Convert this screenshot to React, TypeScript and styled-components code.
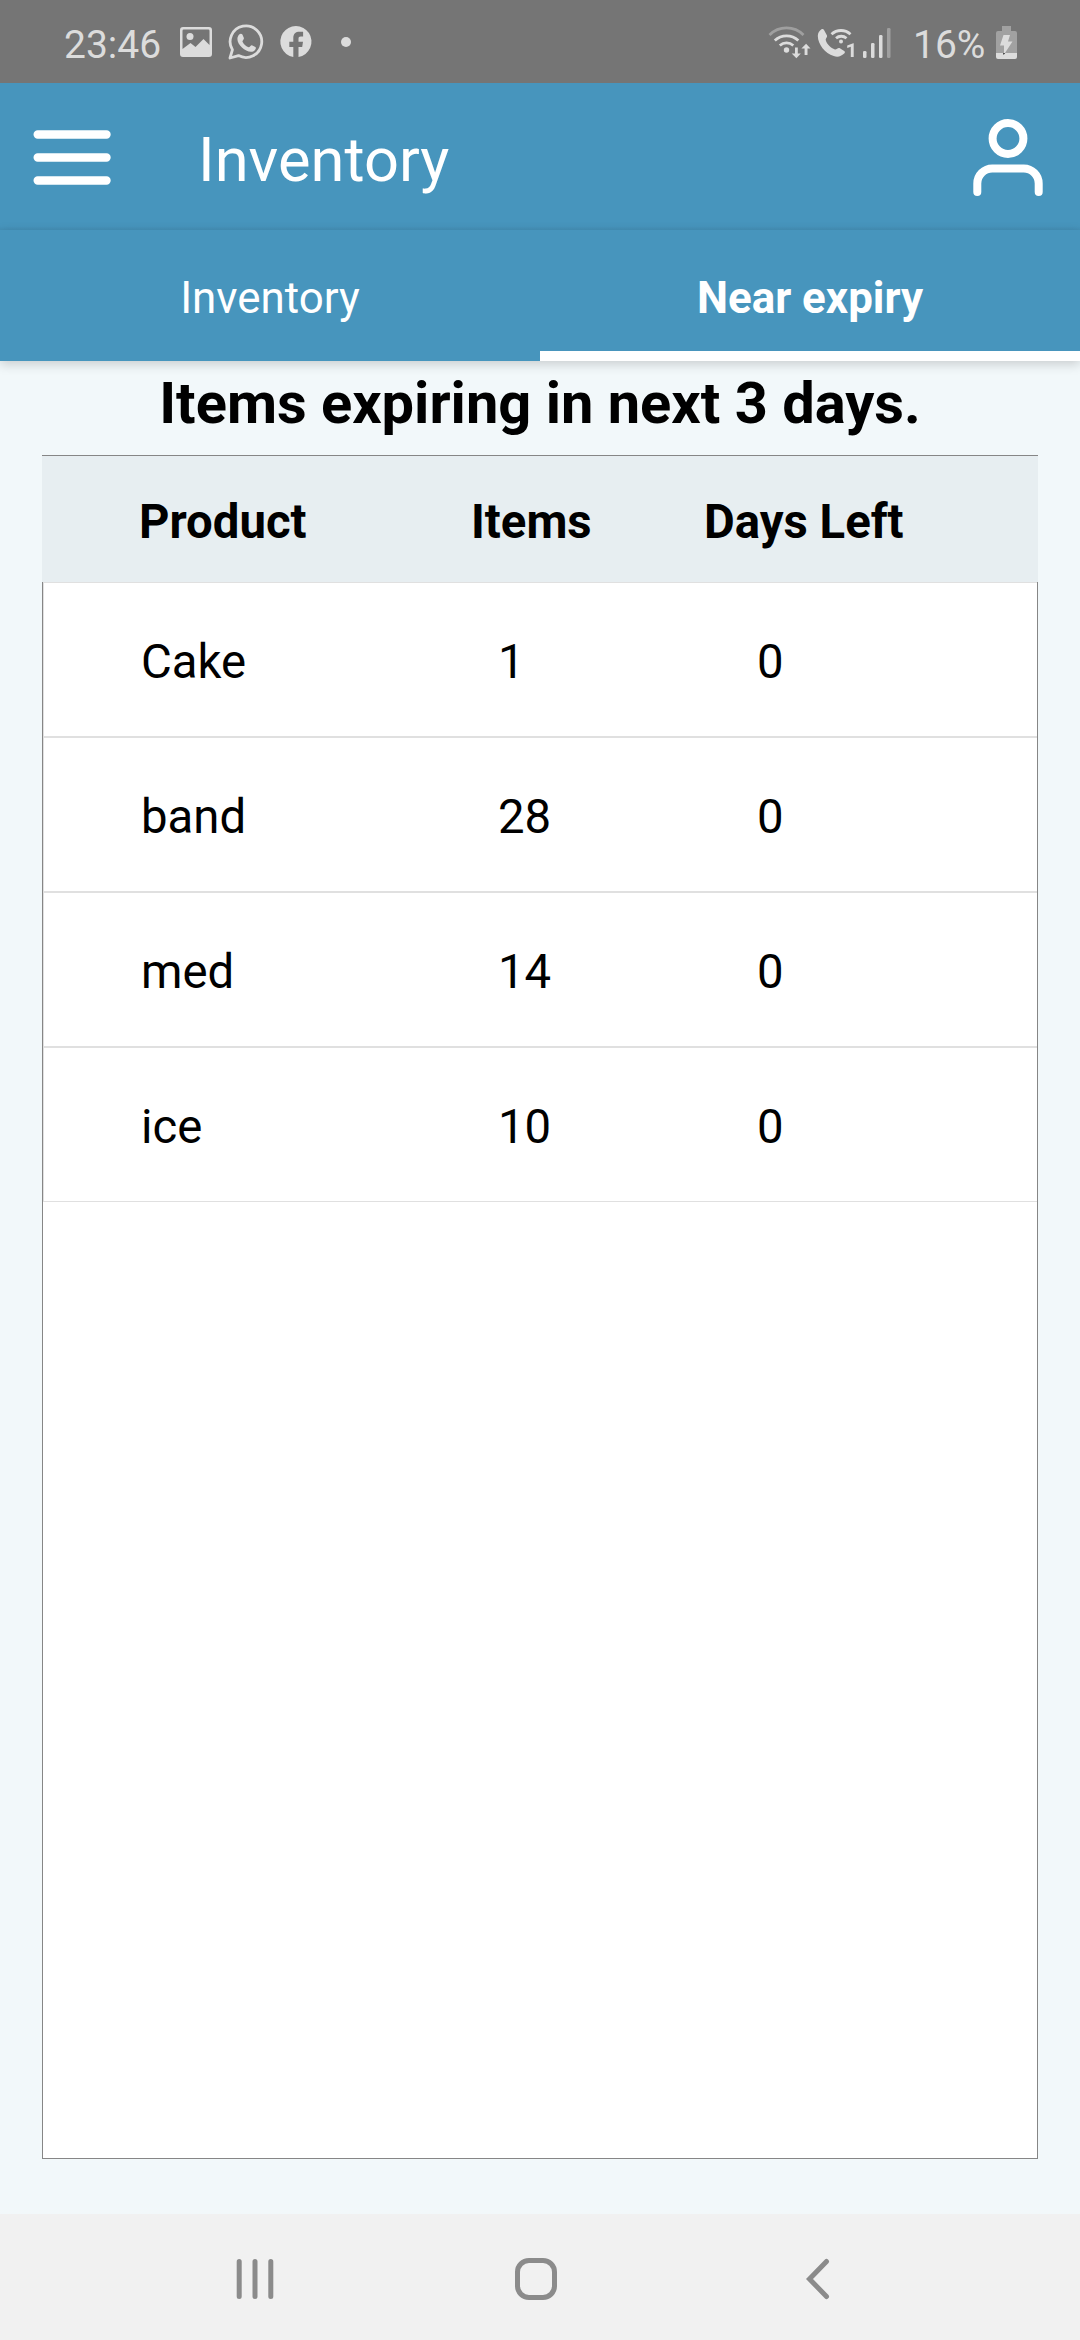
import React from "react";
import styled, { createGlobalStyle } from "styled-components";

const GlobalStyle = createGlobalStyle`
  * { box-sizing: border-box; }
  body { margin: 0; background: #f2f8fa; font-family: Roboto, "Liberation Sans", sans-serif; }
`;

const Screen = styled.div`
  width: 1080px;
  height: 2340px;
  display: flex;
  flex-direction: column;
  overflow: hidden;
  background: #f2f8fa;
`;

const StatusBar = styled.header`
  flex: none;
  height: 83px;
  display: flex;
  justify-content: space-between;
  background: #757575;
  color: #dcdcdc;
  svg { display: block; flex: none; }
`;

const StatusGroup = styled.div`
  display: flex;
  align-items: flex-start;
`;

const StatusText = styled.span<{ $left: number; $width: number }>`
  margin-left: ${(p) => p.$left}px;
  width: ${(p) => p.$width}px;
  padding-top: 22px;
  font-size: 39px;
  line-height: 46px;
  white-space: nowrap;
`;

const AppBar = styled.div`
  flex: none;
  height: 147px;
  display: flex;
  align-items: center;
  background: linear-gradient(#4795bd 0, #4795bd 143px, #4590b7 147px);
  color: #fff;
`;

const IconButton = styled.button`
  border: 0;
  padding: 0;
  background: none;
  color: inherit;
  svg { display: block; }
`;

const Title = styled.h1`
  margin: 0;
  padding: 7px 0 0 82px;
  flex: 1;
  font-size: 61.4px;
  line-height: 72px;
  font-weight: 400;
`;

const Tabs = styled.nav`
  flex: none;
  height: 131px;
  display: grid;
  grid-template-columns: 1fr 1fr;
  background: #4795bd;
  box-shadow: 0 3px 11px rgba(0, 0, 0, 0.18);
  z-index: 1;
`;

const Tab = styled.div<{ $active?: boolean }>`
  display: flex;
  justify-content: center;
  padding-top: 42px;
  border-bottom: 10px solid ${(p) => (p.$active ? "#fff" : "transparent")};
  color: #fff;
  font-size: 43.9px;
  line-height: 52px;
  font-weight: ${(p) => (p.$active ? 700 : 400)};
`;

const Heading = styled.h2`
  flex: none;
  margin: 0;
  height: 94px;
  padding-top: 8px;
  text-align: center;
  font-size: 57.8px;
  line-height: 68px;
  font-weight: 700;
  color: #000;
`;

const Table = styled.section`
  flex: 1;
  margin: 0 42px 55px;
  display: flex;
  flex-direction: column;
  border: 1px solid #868686;
  background: #fff;
  color: #000;
`;

const HeadRow = styled.div`
  flex: none;
  height: 126px;
  margin: 0 -1px;
  padding: 39px 0 0 97px;
  display: grid;
  grid-template-columns: 332px 233px 1fr;
  background: #e7eef1;
  font-size: 47.3px;
  line-height: 55px;
  font-weight: 700;
`;

const Row = styled.div`
  flex: none;
  height: 155px;
  padding: 52px 0 0 97px;
  display: grid;
  grid-template-columns: 357px 259px 1fr;
  border: 1px solid #e0e0e0;
  border-right: 0;
  font-size: 47.3px;
  line-height: 55px;
`;

const NavBar = styled.footer`
  flex: none;
  height: 126px;
  display: flex;
  background: #f1f1f1;
  svg { display: block; }
`;

const items = [
  { product: "Cake", count: 1, days: 0 },
  { product: "band", count: 28, days: 0 },
  { product: "med", count: 14, days: 0 },
  { product: "ice", count: 10, days: 0 },
];

const NotificationIcons = () => (
  <svg width="190" height="83" viewBox="170 0 190 83" fill="#dcdcdc">
    <path fillRule="evenodd" d="M183 27h26q3 0 3 3v24q0 3-3 3h-26q-3 0-3-3V30q0-3 3-3Zm.7 2.5q-1.2 0-1.2 1.2V49l8-6 5 4 8-8 6 6V30.700q0-1.200-1.200-1.200Z" />
    <circle cx="190" cy="36.500" r="3.500" />
    <path d="M230 58l2.400-8.200A15.800 15.800 0 1 1 238.500 55.600Z" fill="none" stroke="#dcdcdc" strokeWidth="2.800" strokeLinejoin="round" />
    <path d="M239.200 34.500c1-1.200 2.700-1 3.200.1l1.500 3.500c.4 1-1.800 2.900-1.400 3.600 1.500 2.800 3.700 4.600 6.200 5.500.8.300 2.300-2.300 3.200-1.900l3.500 1.800c1.300.8-.2 3.600-2.200 4.300-6 2.300-15.800-6-15.800-12.400 0-2 .9-3.500 1.800-4.500Z" />
    <path d="M293.300 57V47h-4v-5.200h4v-3.700c0-4.500 2.500-6.300 6.200-6.300h3.600v4.700h-2.300c-1.700 0-2.300.8-2.300 2.200v3.100h4.500l-.8 5.200h-3.700v10A15.600 15.600 0 1 0 293.300 57Z" />
    <circle cx="346" cy="42" r="5" />
  </svg>
);

const SignalIcons = () => (
  <svg width="130" height="83" viewBox="765 0 130 83" fill="#dcdcdc">
    <g fill="none" stroke="#dcdcdc" strokeWidth="2.800">
      <path d="M769.500 35a24 24 0 0 1 34 0" stroke="#9f9f9f" />
      <path d="M774.800 40.500a17 17 0 0 1 23.500 0" />
      <path d="M779.800 45.500a10 10 0 0 1 13.500 0" />
      <path d="M831.500 34.200a14 14 0 0 1 19 0M836 38.200a8 8 0 0 1 10.500 0" />
    </g>
    <circle cx="786.500" cy="50" r="2.700" />
    <circle cx="841" cy="41.500" r="2" />
    <path d="M795 47.500h2.800v6h3l-4.400 4.700-4.700-4.700h3.300zM804.600 55v-6.500h-3.200l4.700-4.800 4.400 4.800h-3V55z" />
    <path d="M821.500 29.300c1-.7 2-.3 2.500.6l3 5.600c.8 1.500-1.700 3.200-1.300 4.500 1.300 4.500 5 8 9.300 9.400 1.400.4 3-2.100 4.500-1.300l4.700 3c1 .8.800 1.700 0 2.500-3.200 3-6.500 4-10.500 2.500C825 53.300 818 44.500 817.800 36c0-3 1.600-5.300 3.700-6.700Z" />
    <path d="M850.800 57V46.700l-3.600 1.300v-2.500l6-2.300h.5V57z" />
    <rect x="863" y="51" width="3.500" height="7" rx="1.300" />
    <rect x="871" y="43" width="3.500" height="15" rx="1.300" />
    <rect x="879" y="35" width="3.500" height="23" rx="1.300" />
    <rect x="887" y="28" width="3.500" height="30" rx="1.300" fill="#9f9f9f" />
  </svg>
);

const BatteryIcon = () => (
  <svg width="84" height="83" viewBox="996 0 84 83">
    <path d="M1002 26h9v5h4q2 0 2 2v20h-21V33q0-2 2-2h4z" fill="#a1a1a1" />
    <path d="M996 53h21v4q0 2-2 2h-17q-2 0-2-2z" fill="#dcdcdc" />
    <path d="M1003.500 35h6.500l-2 6.500h4.500L1004 54.500v-9h-4z" fill="#dcdcdc" />
    <path d="M1003 53h2.200l-1.600 2z" fill="#333" />
  </svg>
);

const MenuIcon = () => (
  <svg width="116" height="147" viewBox="0 83 116 147" stroke="#fff" strokeWidth="8.400" strokeLinecap="round">
    <path d="M37.700 134.500h68.800M37.700 157.500h68.800M37.700 180.500h68.800" />
  </svg>
);

const UserIcon = () => (
  <svg width="110" height="147" viewBox="970 83 110 147" fill="none" stroke="#fff" strokeWidth="8" strokeLinecap="round">
    <circle cx="1008" cy="138.500" r="15.400" />
    <path d="M977.300 192v-8.500a15 15 0 0 1 15-15h31.400a15 15 0 0 1 15 15v8.500" />
  </svg>
);

const SystemIcons = () => (
  <svg width="1080" height="126" viewBox="0 2214 1080 126" fill="none" stroke="#8b8b8b" strokeWidth="5" strokeLinecap="round">
    <path d="M239.200 2261.500v35M255 2261.500v35M270.800 2261.500v35" />
    <rect x="517.500" y="2260.500" width="37" height="37" rx="11.500" />
    <path d="M826.500 2261.500l-17 17.500 17 17.500" />
  </svg>
);

export default function App() {
  return (
    <>
      <GlobalStyle />
      <Screen>
        <StatusBar>
          <StatusGroup>
            <StatusText $left={64} $width={106}>23:46</StatusText>
            <NotificationIcons />
          </StatusGroup>
          <StatusGroup>
            <SignalIcons />
            <StatusText $left={18} $width={83}>16%</StatusText>
            <BatteryIcon />
          </StatusGroup>
        </StatusBar>
        <AppBar>
          <IconButton aria-label="Menu"><MenuIcon /></IconButton>
          <Title>Inventory</Title>
          <IconButton aria-label="Account"><UserIcon /></IconButton>
        </AppBar>
        <Tabs>
          <Tab>Inventory</Tab>
          <Tab $active>Near expiry</Tab>
        </Tabs>
        <Heading>Items expiring in next 3 days.</Heading>
        <Table>
          <HeadRow>
            <span>Product</span>
            <span>Items</span>
            <span>Days Left</span>
          </HeadRow>
          {items.map((item) => (
            <Row key={item.product}>
              <span>{item.product}</span>
              <span>{item.count}</span>
              <span>{item.days}</span>
            </Row>
          ))}
        </Table>
        <NavBar><SystemIcons /></NavBar>
      </Screen>
    </>
  );
}
